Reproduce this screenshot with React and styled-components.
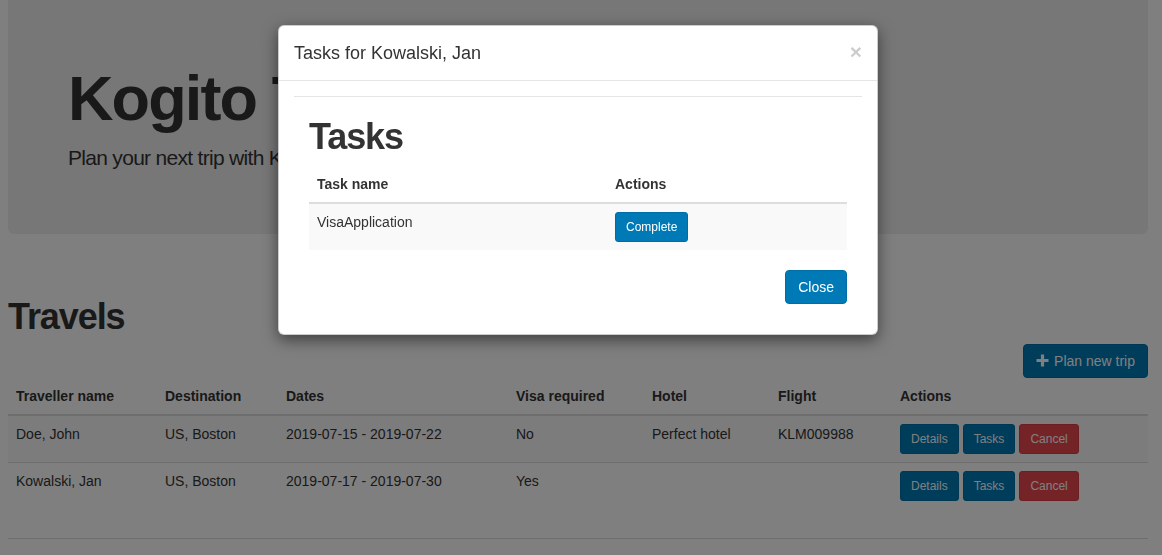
import React from 'react';
import styled, { createGlobalStyle } from 'styled-components';

const GlobalStyle = createGlobalStyle`
  * { box-sizing: border-box; }
  html, body { margin: 0; padding: 0; background: #fff; }
  body {
    font-family: 'Liberation Sans', Arial, sans-serif;
    font-size: 14px;
    line-height: 1.42857;
    color: #333;
    overflow: hidden;
  }
`;

const Page = styled.div`
  width: 1140px;
  margin-left: 8px;
`;

const Jumbotron = styled.header`
  background: #eee;
  border-radius: 0 0 6px 6px;
  padding: 44px 60px 48px;
`;

const HeroTitle = styled.h1`
  margin: 20px 0 10px;
  font-size: 63px;
  line-height: 1.1;
  font-weight: 700;
  letter-spacing: -0.03em;
  white-space: nowrap;
`;

const HeroLead = styled.p`
  margin: 0 0 13px;
  font-size: 21px;
  line-height: 30px;
  font-weight: 300;
  letter-spacing: -0.7px;
  white-space: nowrap;
`;

const Heading = styled.h1`
  margin: ${p => p.$margin};
  font-size: 36px;
  line-height: 1.1;
  font-weight: 700;
  letter-spacing: -0.03em;
`;

const Toolbar = styled.div`
  display: flex;
  justify-content: flex-end;
`;

const Button = styled.button`
  display: inline-flex;
  align-items: center;
  gap: 5px;
  margin: 0;
  font-family: inherit;
  font-weight: 400;
  font-size: ${p => (p.$size === 'sm' ? '12px' : '14px')};
  line-height: ${p => (p.$size === 'sm' ? '18px' : '20px')};
  padding: ${p => (p.$size === 'sm' ? '5px 10px' : '6px 12px')};
  border-radius: ${p => (p.$size === 'sm' ? '3px' : '4px')};
  border: 1px solid ${p => (p.$variant === 'danger' ? '#d63f47' : '#006ea6')};
  background: ${p => (p.$variant === 'danger' ? '#e9474f' : '#007ab6')};
  color: #fff;
  cursor: pointer;
  white-space: nowrap;
`;

const Table = styled.table`
  width: 100%;
  border-collapse: collapse;
  table-layout: fixed;
  margin: 0 0 ${p => p.$mb}px;
  border-bottom: ${p => (p.$closed ? '1px solid #ddd' : '0')};
`;

const Th = styled.th`
  text-align: left;
  vertical-align: bottom;
  padding: 8px;
  font-weight: 700;
  line-height: 20px;
  border-bottom: 2px solid #ddd;
  width: ${p => (p.$w ? `${p.$w}px` : 'auto')};
`;

const Tr = styled.tr`
  &:nth-child(odd) { background: #f9f9f9; }
`;

const Td = styled.td`
  vertical-align: top;
  padding: 8px 8px ${p => 8 + (p.$extra || 0)}px;
  line-height: 20px;
  border-top: 1px solid #ddd;
`;

const ActionGroup = styled.div`
  display: flex;
  gap: 4px;
`;

const Backdrop = styled.div`
  position: fixed;
  inset: 0;
  background: rgba(0, 0, 0, 0.5);
  z-index: 10;
`;

const Dialog = styled.div`
  position: fixed;
  top: 25px;
  left: 278px;
  width: 600px;
  z-index: 11;
  background: #fff;
  border: 1px solid rgba(0, 0, 0, 0.2);
  border-radius: 6px;
  box-shadow: 0 5px 15px rgba(0, 0, 0, 0.5);
`;

const ModalHeader = styled.div`
  display: flex;
  justify-content: space-between;
  align-items: center;
  padding: 15px;
  border-bottom: 1px solid #e5e5e5;
`;

const ModalTitle = styled.h4`
  margin: 0;
  font-size: 18px;
  line-height: 24px;
  font-weight: 400;
`;

const CloseX = styled.button`
  background: none;
  border: 0;
  padding: 0;
  margin-top: -3px;
  font-family: inherit;
  font-size: 21px;
  font-weight: 700;
  line-height: 1;
  color: #000;
  opacity: 0.2;
`;

const ModalBody = styled.div`
  padding: 15px;
`;

const Divider = styled.hr`
  margin: 0;
  border: 0;
  border-top: 1px solid #e5e5e5;
`;

const Panel = styled.div`
  padding: 0 15px 15px;
`;

const Footer = styled.div`
  display: flex;
  justify-content: flex-end;
`;

const PlusIcon = () => (
  <svg width="13" height="13" viewBox="0 0 13 13" aria-hidden="true">
    <path d="M4.9 0.5h3.2v4.4h4.4v3.2H8.1v4.4H4.9V8.1H0.5V4.9h4.4z" fill="currentColor" />
  </svg>
);

const travels = [
  { name: 'Doe, John', dest: 'US, Boston', dates: '2019-07-15 - 2019-07-22', visa: 'No', hotel: 'Perfect hotel', flight: 'KLM009988', extra: 0 },
  { name: 'Kowalski, Jan', dest: 'US, Boston', dates: '2019-07-17 - 2019-07-30', visa: 'Yes', hotel: '', flight: '', extra: 29 },
];

export default function App() {
  return (
    <>
      <GlobalStyle />
      <Page>
        <Jumbotron>
          <HeroTitle>Kogito Travel Agency</HeroTitle>
          <HeroLead>Plan your next trip with Kogito Travel Agency</HeroLead>
        </Jumbotron>

        <Heading $margin="63px 0 7px">Travels</Heading>
        <Toolbar>
          <Button>
            <PlusIcon />
            Plan new trip
          </Button>
        </Toolbar>
        <Table $mb={20} $closed>
          <thead>
            <tr>
              <Th $w={149}>Traveller name</Th>
              <Th $w={121}>Destination</Th>
              <Th $w={230}>Dates</Th>
              <Th $w={136}>Visa required</Th>
              <Th $w={126}>Hotel</Th>
              <Th $w={122}>Flight</Th>
              <Th>Actions</Th>
            </tr>
          </thead>
          <tbody>
            {travels.map(t => (
              <Tr key={t.name}>
                <Td>{t.name}</Td>
                <Td>{t.dest}</Td>
                <Td>{t.dates}</Td>
                <Td>{t.visa}</Td>
                <Td>{t.hotel}</Td>
                <Td>{t.flight}</Td>
                <Td $extra={t.extra}>
                  <ActionGroup>
                    <Button $size="sm">Details</Button>
                    <Button $size="sm">Tasks</Button>
                    <Button $size="sm" $variant="danger">Cancel</Button>
                  </ActionGroup>
                </Td>
              </Tr>
            ))}
          </tbody>
        </Table>
      </Page>

      <Backdrop />
      <Dialog role="dialog">
        <ModalHeader>
          <ModalTitle>Tasks for Kowalski, Jan</ModalTitle>
          <CloseX aria-label="Close">×</CloseX>
        </ModalHeader>
        <ModalBody>
          <Divider />
          <Panel>
            <Heading $margin="20px 0 9px">Tasks</Heading>
            <Table $mb={20}>
              <thead>
                <tr>
                  <Th $w={298}>Task name</Th>
                  <Th>Actions</Th>
                </tr>
              </thead>
              <tbody>
                <Tr>
                  <Td>VisaApplication</Td>
                  <Td>
                    <Button $size="sm">Complete</Button>
                  </Td>
                </Tr>
              </tbody>
            </Table>
            <Footer>
              <Button>Close</Button>
            </Footer>
          </Panel>
        </ModalBody>
      </Dialog>
    </>
  );
}
